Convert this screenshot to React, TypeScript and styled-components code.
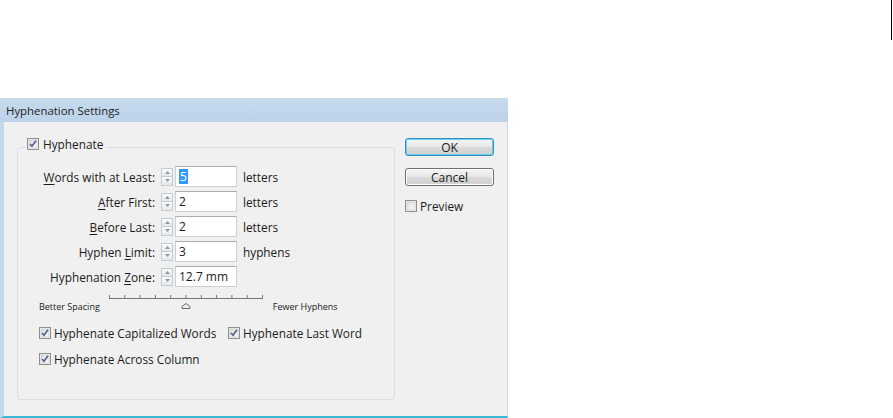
import React from "react";
import styled, { createGlobalStyle } from "styled-components";

const Global = createGlobalStyle`
  html, body { margin: 0; padding: 0; background: #ffffff; }
  body {
    font-family: "Open Sans", "Noto Sans", sans-serif;
    font-size: 11.8px;
    color: #1b1b1b;
  }
`;

const Page = styled.div`
  width: 893px;
  height: 418px;
  overflow: hidden;
  display: flex;
  flex-direction: column;
`;

const TopStrip = styled.div`
  height: 98px;
  flex: none;
  display: flex;
  justify-content: flex-end;
  align-items: flex-start;
`;

const Mark = styled.div`
  width: 1px;
  height: 40px;
  background: #000;
  margin-right: 1px;
`;

const Dialog = styled.div`
  width: 508px;
  height: 320px;
  flex: none;
  display: flex;
  flex-direction: column;
`;

const TitleBar = styled.div`
  height: 24px;
  flex: none;
  display: flex;
  align-items: center;
  padding-left: 6px;
  background: linear-gradient(#c8dbee, #bcd2e9);
  font-size: 11.4px;
  color: #1e1e1e;
`;

const Frame = styled.div`
  flex: 1;
  min-height: 0;
  box-sizing: border-box;
  display: flex;
  align-items: flex-start;
  background: #f0f0f0;
  border-left: 4px solid #c6d9ed;
  border-right: 1px solid #c6d9ed;
  border-bottom: 2px solid #39b9d4;
  padding: 16px 0 0 13px;
`;

const GroupBox = styled.div`
  position: relative;
  box-sizing: border-box;
  margin-top: 9px;
  width: 378px;
  height: 253px;
  border: 1px solid #d5dfe5;
  border-radius: 3px;
  padding: 18px 0 0 0;
  display: flex;
  flex-direction: column;
`;

const Legend = styled.div`
  position: absolute;
  top: -13px;
  left: 8px;
  padding: 0 3px 0 1px;
  background: #f0f0f0;
  display: flex;
  align-items: center;
  gap: 4px;
  height: 18px;
`;

const FieldGrid = styled.div`
  display: grid;
  grid-template-columns: 143px 12px 64px auto;
  row-gap: 4px;
  align-items: center;
`;

const Label = styled.div`
  text-align: right;
  padding-right: 6px;
  white-space: nowrap;
`;

const Key = styled.span`
  text-decoration: underline;
  text-underline-offset: 2px;
`;

const Spinner = styled.div`
  width: 12px;
  height: 18px;
  display: flex;
  flex-direction: column;
`;

const SpinHalf = styled.div`
  flex: 1;
  border: 1px solid #c3cbd3;
  background: linear-gradient(#fbfbfb, #e6e9ec);
  display: flex;
  align-items: center;
  justify-content: center;
  & + & { border-top: none; }
`;

const Input = styled.div`
  margin-left: 2px;
  width: 62px;
  height: 21px;
  box-sizing: border-box;
  background: #fff;
  border: 1px solid #c9d0d6;
  border-top-color: #abadb3;
  display: flex;
  align-items: center;
  padding-left: 3px;
  font-size: 12px;
`;

const Selected = styled.span`
  background: #3399ff;
  color: #fff;
  padding: 0 1px;
  line-height: 15px;
`;

const Unit = styled.div`
  padding-left: 6px;
`;

const SliderRow = styled.div`
  margin-top: 6px;
  padding-left: 21px;
  display: flex;
  align-items: flex-start;
  gap: 9px;
`;

const SmallLabel = styled.div`
  padding-top: 8px;
  font-size: 9px;
  line-height: 12px;
  white-space: nowrap;
`;

const CheckGrid = styled.div`
  margin-top: 12px;
  padding-left: 21px;
  display: grid;
  grid-template-columns: 189px auto;
  row-gap: 10px;
`;

const CheckItem = styled.label`
  display: flex;
  align-items: center;
  gap: 3px;
  height: 16px;
  white-space: nowrap;
`;

const RightColumn = styled.div`
  margin-left: 10px;
  width: 89px;
  display: flex;
  flex-direction: column;
`;

const Button = styled.div<{ $default?: boolean }>`
  height: 18px;
  box-sizing: border-box;
  border-radius: 3px;
  border: 1px solid ${(p) => (p.$default ? "#3c8dbc" : "#707070")};
  background: linear-gradient(#f6f6f6 0%, #e7e7e7 48%, #dadada 52%, #d0d0d0 100%);
  box-shadow: ${(p) => (p.$default ? "inset 0 0 0 1px #5fd4f6" : "inset 0 0 0 1px #fcfcfc")};
  display: flex;
  align-items: center;
  justify-content: center;
  font-size: 12px;
  & + & { margin-top: 12px; }
`;

const PreviewRow = styled(CheckItem)`
  margin-top: 12px;
`;

const Arrow = ({ up }: { up?: boolean }) => (
  <svg width="5" height="3" viewBox="0 0 5 3">
    <path d={up ? "M0 3 L2.5 0 L5 3 Z" : "M0 0 L5 0 L2.5 3 Z"} fill="#8a9aab" />
  </svg>
);

const Check = ({ checked = true }: { checked?: boolean }) => (
  <svg width="12" height="12" viewBox="0 0 12 12" style={{ flex: "none" }}>
    <defs>
      <linearGradient id="cbg" x1="0" y1="0" x2="1" y2="1">
        <stop offset="0" stopColor="#dcdcdc" />
        <stop offset="1" stopColor="#fbfbfb" />
      </linearGradient>
    </defs>
    <rect x="0.5" y="0.5" width="11" height="11" fill="#f4f4f4" stroke="#8f8f8f" />
    <rect x="2" y="2" width="8" height="8" fill="url(#cbg)" stroke="#c4c4c4" strokeWidth="0.6" />
    {checked && (
      <path d="M3 6 L5 8.3 L9 2.8" fill="none" stroke="#4b5f8e" strokeWidth="1.6" />
    )}
  </svg>
);

const SliderSvg = () => {
  const ticks = Array.from({ length: 11 }, (_, i) => 0.5 + i * 15.3);
  return (
    <svg width="155" height="18" viewBox="0 0 155 18" style={{ flex: "none" }}>
      <line x1="0" y1="5.5" x2="154" y2="5.5" stroke="#777" strokeWidth="1" />
      {ticks.map((x) => (
        <line key={x} x1={x} y1="2" x2={x} y2="5" stroke="#777" strokeWidth="1" />
      ))}
      <path d="M77 10.5 L81 13.5 L81 15.5 L73 15.5 L73 13.5 Z" fill="#ececec" stroke="#6e6e6e" strokeWidth="1" />
    </svg>
  );
};

type Field = { label: React.ReactNode; value: string; unit?: string; selected?: boolean };

const fields: Field[] = [
  { label: <><Key>W</Key>ords with at Least:</>, value: "5", unit: "letters", selected: true },
  { label: <><Key>A</Key>fter First:</>, value: "2", unit: "letters" },
  { label: <><Key>B</Key>efore Last:</>, value: "2", unit: "letters" },
  { label: <>Hyphen <Key>L</Key>imit:</>, value: "3", unit: "hyphens" },
  { label: <>Hyphenation <Key>Z</Key>one:</>, value: "12.7 mm" },
];

export default function App() {
  return (
    <Page>
      <Global />
      <TopStrip>
        <Mark />
      </TopStrip>
      <Dialog>
        <TitleBar>Hyphenation Settings</TitleBar>
        <Frame>
          <GroupBox>
            <Legend>
              <Check />
              <span>Hyphenate</span>
            </Legend>
            <FieldGrid>
              {fields.map((f, i) => (
                <React.Fragment key={i}>
                  <Label>{f.label}</Label>
                  <Spinner>
                    <SpinHalf><Arrow up /></SpinHalf>
                    <SpinHalf><Arrow /></SpinHalf>
                  </Spinner>
                  <Input>{f.selected ? <Selected>{f.value}</Selected> : f.value}</Input>
                  <Unit>{f.unit ?? ""}</Unit>
                </React.Fragment>
              ))}
            </FieldGrid>
            <SliderRow>
              <SmallLabel>Better Spacing</SmallLabel>
              <SliderSvg />
              <SmallLabel>Fewer Hyphens</SmallLabel>
            </SliderRow>
            <CheckGrid>
              <CheckItem><Check /><span>Hyphenate Capitalized Words</span></CheckItem>
              <CheckItem><Check /><span>Hyphenate Last Word</span></CheckItem>
              <CheckItem><Check /><span>Hyphenate Across Column</span></CheckItem>
            </CheckGrid>
          </GroupBox>
          <RightColumn>
            <Button $default>OK</Button>
            <Button>Cancel</Button>
            <PreviewRow><Check checked={false} /><span>Preview</span></PreviewRow>
          </RightColumn>
        </Frame>
      </Dialog>
    </Page>
  );
}
